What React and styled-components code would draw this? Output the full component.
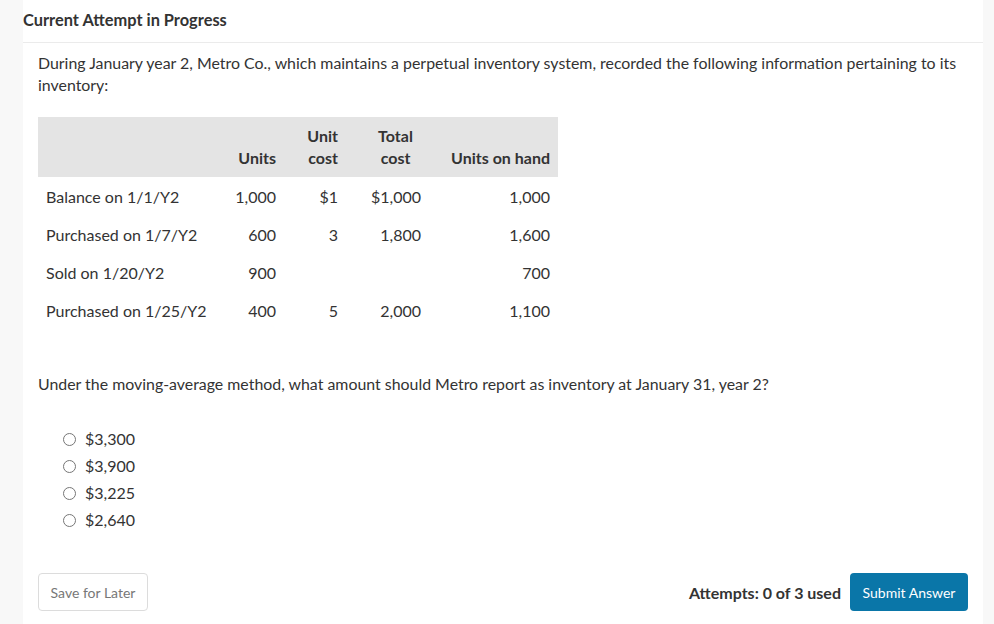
import React from "react";
import styled, { createGlobalStyle } from "styled-components";

const GlobalStyle = createGlobalStyle`
  body {
    margin: 0;
    background-color: #f8f8f8;
    font-family: Lato, "Liberation Sans", sans-serif;
    color: #333;
  }
`;

const Card = styled.div`
  margin-left: 23px;
  width: 960px;
  height: 624px;
  background-color: white;
  display: flex;
  flex-direction: column;
`;

const Header = styled.div`
  height: 43px;
  display: flex;
  align-items: center;
  font-weight: bold;
  font-size: 16.4px;
  color: #333;
  border-bottom: 1px solid #ebebeb;
  padding-bottom: 4px;
  box-sizing: border-box;
`;

const Body = styled.div`
  flex: 1;
  padding: 9px 15px 0 15px;
  display: flex;
  flex-direction: column;
`;

const Paragraph = styled.p`
  margin: 0;
  font-size: 15.9px;
  line-height: 22px;
`;

const Table = styled.table`
  border-collapse: collapse;
  margin-top: 21px;
  font-size: 16px;
  width: 520px;
  table-layout: fixed;
`;

const HeadRow = styled.tr`
  background-color: #e4e4e4;
  height: 60px;
`;

const Th = styled.th`
  box-sizing: border-box;
  font-weight: bold;
  line-height: 22px;
  vertical-align: bottom;
  padding: 6px ${({ $pr }) => $pr}px 8px ${({ $pl }) => $pl || 0}px;
  text-align: ${({ $align }) => $align || "right"};
  width: ${({ $w }) => $w}px;
`;

const Tr = styled.tr`
  height: 38px;
`;

const Td = styled.td`
  padding: 2px ${({ $pr }) => $pr}px 0 ${({ $pl }) => $pl || 0}px;
  text-align: ${({ $align }) => $align || "right"};
  line-height: 22px;
  white-space: nowrap;
`;

const Question = styled(Paragraph)`
  margin-top: 44px;
`;

const Choices = styled.div`
  margin-top: 33px;
  padding-left: 25px;
  display: flex;
  flex-direction: column;
  gap: 5px;
`;

const Choice = styled.label`
  display: flex;
  align-items: center;
  gap: 9px;
  font-size: 16px;
  line-height: 22px;
`;

const Radio = styled.span`
  width: 11px;
  height: 11px;
  border: 1px solid #767676;
  border-radius: 50%;
  display: inline-block;
  margin-top: 1px;
`;

const Footer = styled.div`
  margin-top: auto;
  margin-bottom: 13px;
  display: flex;
  align-items: center;
`;

const SaveButton = styled.button`
  font-family: Lato, "Liberation Sans", sans-serif;
  font-size: 14px;
  color: #777;
  background-color: white;
  border: 1px solid #dcdcdc;
  border-radius: 4px;
  height: 38px;
  width: 110px;
  padding: 0;
`;

const Attempts = styled.span`
  margin-left: auto;
  font-weight: bold;
  font-size: 16px;
  margin-right: 9px;
`;

const SubmitButton = styled.button`
  font-family: Lato, "Liberation Sans", sans-serif;
  font-size: 14px;
  color: white;
  background-color: #0a76a8;
  border: none;
  border-radius: 4px;
  height: 38px;
  width: 118px;
  padding: 0;
`;

const columns = [
  { w: 176, pr: 0, pl: 8, align: "left" },
  { w: 70, pr: 8 },
  { w: 62, pr: 8 },
  { w: 83, pr: 8, headPl: 16, headPr: 0, headAlign: "center" },
  { w: 129, pr: 8 },
];

const rows = [
  ["Balance on 1/1/Y2", "1,000", "$1", "$1,000", "1,000"],
  ["Purchased on 1/7/Y2", "600", "3", "1,800", "1,600"],
  ["Sold on 1/20/Y2", "900", "", "", "700"],
  ["Purchased on 1/25/Y2", "400", "5", "2,000", "1,100"],
];

const headers = [
  "",
  "Units",
  <>Unit<br />cost</>,
  <>Total<br />cost</>,
  "Units on hand",
];

const choices = ["$3,300", "$3,900", "$3,225", "$2,640"];

export default function App() {
  return (
    <>
      <GlobalStyle />
      <Card>
        <Header>Current Attempt in Progress</Header>
        <Body>
          <Paragraph>
            During January year 2, Metro Co., which maintains a perpetual inventory
            system, recorded the following information pertaining to its inventory:
          </Paragraph>
          <Table>
            <thead>
              <HeadRow>
                {headers.map((h, i) => {
                  const col = columns[i];
                  return (
                    <Th
                      key={i}
                      $w={col.w}
                      $pr={col.headPr ?? col.pr}
                      $pl={col.headPl ?? 0}
                      $align={col.headAlign || col.align}
                    >
                      {h}
                    </Th>
                  );
                })}
              </HeadRow>
            </thead>
            <tbody>
              {rows.map((r, ri) => (
                <Tr key={ri}>
                  {r.map((c, ci) => (
                    <Td
                      key={ci}
                      $pr={columns[ci].pr}
                      $pl={columns[ci].pl}
                      $align={columns[ci].align}
                    >
                      {c}
                    </Td>
                  ))}
                </Tr>
              ))}
            </tbody>
          </Table>
          <Question>
            Under the moving-average method, what amount should Metro report as
            inventory at January 31, year 2?
          </Question>
          <Choices>
            {choices.map((c) => (
              <Choice key={c}>
                <Radio />
                {c}
              </Choice>
            ))}
          </Choices>
          <Footer>
            <SaveButton>Save for Later</SaveButton>
            <Attempts>Attempts: 0 of 3 used</Attempts>
            <SubmitButton>Submit Answer</SubmitButton>
          </Footer>
        </Body>
      </Card>
    </>
  );
}
